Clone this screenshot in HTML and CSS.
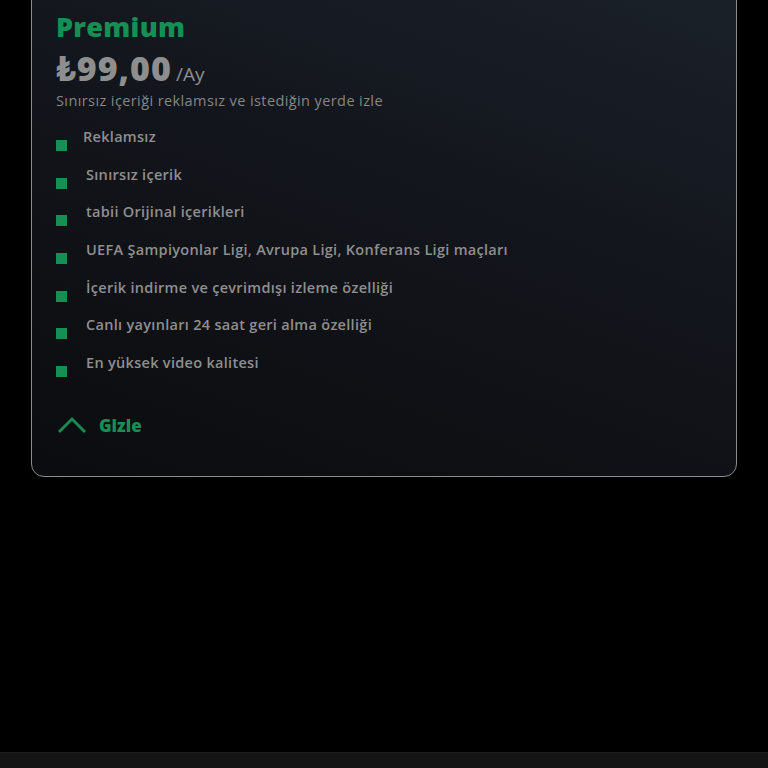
FILE: index.html
```html
<!DOCTYPE html>
<html lang="tr">
<head>
<meta charset="utf-8">
<link rel="stylesheet" href="styles.css">
</head>
<body>
<div class="page">
  <div class="card">
    <h2 class="plan">Premium</h2>
    <div class="price"><span class="amount">₺99,00</span><span class="period">/Ay</span></div>
    <p class="desc">Sınırsız içeriği reklamsız ve istediğin yerde izle</p>
    <ul class="features">
      <li class="feat first"><span class="dot"></span><span class="txt">Reklamsız</span></li>
      <li class="feat"><span class="dot"></span><span class="txt">Sınırsız içerik</span></li>
      <li class="feat"><span class="dot"></span><span class="txt">tabii Orijinal içerikleri</span></li>
      <li class="feat"><span class="dot"></span><span class="txt">UEFA Şampiyonlar Ligi, Avrupa Ligi, Konferans Ligi maçları</span></li>
      <li class="feat"><span class="dot"></span><span class="txt">İçerik indirme ve çevrimdışı izleme özelliği</span></li>
      <li class="feat"><span class="dot"></span><span class="txt">Canlı yayınları 24 saat geri alma özelliği</span></li>
      <li class="feat"><span class="dot"></span><span class="txt">En yüksek video kalitesi</span></li>
    </ul>
    <button class="toggle">
      <svg class="chev" width="30" height="18" viewBox="0 0 30 18"><path d="M2 16 L15 3 L28 16" fill="none" stroke="#178a52" stroke-width="3" stroke-linejoin="miter"/></svg>
      <span>Gizle</span>
    </button>
  </div>
  <div class="spacer"></div>
  <div class="bottombar"></div>
</div>
</body>
</html>
```

FILE: styles.css
```css
* { box-sizing: border-box; }
html, body { margin: 0; padding: 0; background: #000; }
body { font-family: "Open Sans", "Lato", sans-serif; }
.page { height: 768px; display: flex; flex-direction: column; overflow: hidden; }
.card {
  margin: -20px 31px 0 31px;
  width: 706px;
  border: 1.5px solid #8c8c8c;
  border-radius: 13px;
  background: linear-gradient(200deg, #1b212a 0%, #12151b 45%, #0b0c0f 100%);
  padding: 31px 24px 41px 24px;
  display: flex;
  flex-direction: column;
}
.plan {
  margin: 0;
  font-size: 27px;
  line-height: 30px;
  font-weight: 800;
  color: #168f55;
  letter-spacing: 0.3px;
}
.price { margin-top: 8px; display: flex; align-items: baseline; height: 36px; }
.amount { font-size: 34px; line-height: 36px; font-weight: 800; color: #8e8e8e; letter-spacing: 1px; }
.period { font-size: 19px; font-weight: 400; color: #8e8e8e; margin-left: 4px; }
.desc { margin: 5px 0 0 0; font-size: 14.5px; line-height: 20px; color: #868686; letter-spacing: 0.4px; }
.features { list-style: none; margin: 16px 0 0 0; padding: 0; display: flex; flex-direction: column; gap: 17.7px; }
.feat { display: flex; align-items: flex-start; height: 20px; }
.dot { width: 11px; height: 11px; background: #168f55; margin-top: 13px; flex: none; }
.txt { margin-left: 19px; font-size: 14.5px; line-height: 20px; font-weight: 600; color: #8f8f8f; letter-spacing: 0.3px; }
.first .txt { margin-left: 16px; }
.toggle {
  margin-top: 42px;
  display: flex;
  align-items: center;
  gap: 12px;
  background: none;
  border: 0;
  padding: 0;
  height: 20px;
  font-family: inherit;
  font-size: 17px;
  font-weight: 800;
  color: #168f55;
  cursor: pointer;
}
.chev { margin-left: 1px; }
.spacer { flex: 1; }
.bottombar { height: 16px; background: #141414; border-top: 1px solid #1c1c1c; }
```
